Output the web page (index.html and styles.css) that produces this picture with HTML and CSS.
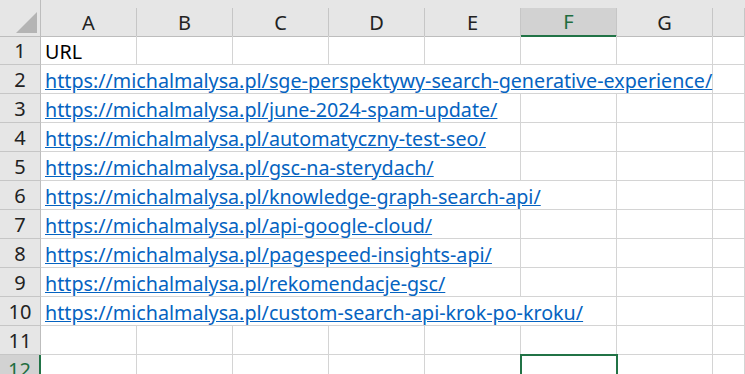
FILE: index.html
```html
<!DOCTYPE html>
<html lang="pl">
<head>
    <meta charset="UTF-8">
    <meta name="viewport" content="width=device-width, initial-scale=1.0">
    <link rel="stylesheet" href="styles.css">
    <title>Arkusz1</title>
</head>
<body>
    <div class="sheet">
        <div class="row head">
            <div class="corner"><span class="tri"></span></div>
            <div class="col-head">A</div>
            <div class="col-head">B</div>
            <div class="col-head">C</div>
            <div class="col-head">D</div>
            <div class="col-head">E</div>
            <div class="col-head selected">F</div>
            <div class="col-head">G</div>
            <div class="col-head"></div>
        </div>

        <div class="row">
            <div class="row-head">1</div>
            <div class="cell">URL</div>
            <div class="cell"></div><div class="cell"></div><div class="cell"></div><div class="cell"></div><div class="cell"></div><div class="cell"></div><div class="cell"></div>
        </div>
        <div class="row">
            <div class="row-head">2</div>
            <div class="cell span7"><a href="#">https://michalmalysa.pl/sge-perspektywy-search-generative-experience/</a></div>
            <div class="cell"></div>
        </div>
        <div class="row">
            <div class="row-head">3</div>
            <div class="cell span5"><a href="#">https://michalmalysa.pl/june-2024-spam-update/</a></div>
            <div class="cell"></div><div class="cell"></div><div class="cell"></div>
        </div>
        <div class="row">
            <div class="row-head">4</div>
            <div class="cell span5"><a href="#">https://michalmalysa.pl/automatyczny-test-seo/</a></div>
            <div class="cell"></div><div class="cell"></div><div class="cell"></div>
        </div>
        <div class="row">
            <div class="row-head">5</div>
            <div class="cell span5"><a href="#">https://michalmalysa.pl/gsc-na-sterydach/</a></div>
            <div class="cell"></div><div class="cell"></div><div class="cell"></div>
        </div>
        <div class="row">
            <div class="row-head">6</div>
            <div class="cell span6"><a href="#">https://michalmalysa.pl/knowledge-graph-search-api/</a></div>
            <div class="cell"></div><div class="cell"></div>
        </div>
        <div class="row">
            <div class="row-head">7</div>
            <div class="cell span5"><a href="#">https://michalmalysa.pl/api-google-cloud/</a></div>
            <div class="cell"></div><div class="cell"></div><div class="cell"></div>
        </div>
        <div class="row">
            <div class="row-head">8</div>
            <div class="cell span5"><a href="#">https://michalmalysa.pl/pagespeed-insights-api/</a></div>
            <div class="cell"></div><div class="cell"></div><div class="cell"></div>
        </div>
        <div class="row">
            <div class="row-head">9</div>
            <div class="cell span5"><a href="#">https://michalmalysa.pl/rekomendacje-gsc/</a></div>
            <div class="cell"></div><div class="cell"></div><div class="cell"></div>
        </div>
        <div class="row">
            <div class="row-head">10</div>
            <div class="cell span6"><a href="#">https://michalmalysa.pl/custom-search-api-krok-po-kroku/</a></div>
            <div class="cell"></div><div class="cell"></div>
        </div>
        <div class="row">
            <div class="row-head">11</div>
            <div class="cell"></div><div class="cell"></div><div class="cell"></div><div class="cell"></div><div class="cell"></div><div class="cell"></div><div class="cell"></div><div class="cell"></div>
        </div>
        <div class="row">
            <div class="row-head selected">12</div>
            <div class="cell"></div><div class="cell"></div><div class="cell"></div><div class="cell"></div><div class="cell"></div><div class="cell active"></div><div class="cell"></div><div class="cell"></div>
        </div>
    </div>
</body>
</html>
```

FILE: styles.css
```css
* {
    box-sizing: border-box;
}

body {
    margin: 0;
    height: 374px;
    overflow: hidden;
    background: #ffffff;
    font-family: "Noto Sans", "Open Sans", sans-serif;
    font-size: 19.7px;
    color: #000000;
}

.sheet {
    width: 745px;
}

.row {
    display: grid;
    grid-template-columns: 41px repeat(7, 96px) 1fr;
    height: 29px;
}

.row.head {
    height: 36px;
    background: #e6e6e6;
}

.corner {
    position: relative;
    border-right: 1px solid #bdbdbd;
    border-bottom: 1px solid #bdbdbd;
}

.tri {
    position: absolute;
    right: 3px;
    bottom: 3px;
    width: 0;
    height: 0;
    border-left: 21px solid transparent;
    border-bottom: 21px solid #b4b4b4;
}

.col-head {
    margin-top: 8px;
    border-right: 1px solid #c6c6c6;
    border-bottom: 1px solid #bdbdbd;
    display: flex;
    align-items: center;
    justify-content: center;
    color: #222222;
    font-size: 20px;
}

.col-head.selected {
    background: #d2d2d2;
    color: #1f6d40;
    border-bottom: 2px solid #217346;
}

.row-head {
    background: #e6e6e6;
    border-right: 1px solid #bdbdbd;
    border-bottom: 1px solid #c6c6c6;
    display: flex;
    align-items: center;
    justify-content: center;
    color: #222222;
    font-size: 20px;
}

.row-head.selected {
    background: #d2d2d2;
    color: #1f6d40;
    border-right: 2px solid #217346;
}

.cell {
    border-right: 1px solid #d4d4d4;
    border-bottom: 1px solid #d4d4d4;
    padding: 0 4px;
    display: flex;
    align-items: flex-end;
    white-space: nowrap;
    line-height: 24px;
}

.cell.active {
    outline: 2px solid #217346;
    outline-offset: -1px;
}

.span5 { grid-column: span 5; }
.span6 { grid-column: span 6; }
.span7 { grid-column: span 7; }

a {
    color: #0563c1;
    text-decoration: underline;
}
```
